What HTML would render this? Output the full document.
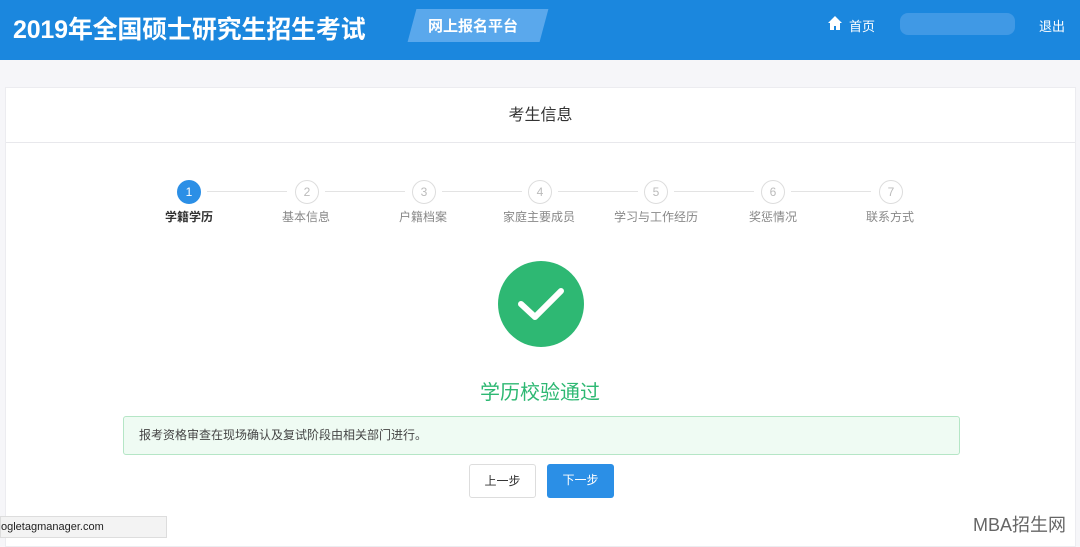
<!DOCTYPE html>
<html><head><meta charset="utf-8"><style>
*{margin:0;padding:0;box-sizing:border-box}
body{width:1080px;height:536px;background:#f6f6f9;font-family:"Liberation Sans","Noto Sans CJK SC",sans-serif;position:relative;overflow:hidden}
.hdr{position:absolute;left:0;top:0;width:1080px;height:60px;background:#1b87de}
.t{position:absolute;left:13px;top:10px;color:#fff;font-size:25px;font-weight:bold;letter-spacing:-0.2px}
.tag{position:absolute;left:412px;top:9px;width:132px;height:33px;background:#5aa8ec;transform:skewX(-15deg)}
.tagt{position:absolute;left:428px;top:15px;color:#fff;font-size:15px;font-weight:bold}
.nav{position:absolute;color:#fff;font-size:13px;top:16px}
.card{position:absolute;left:5px;top:87px;width:1071px;height:460px;background:#fff;border:1px solid #ececf0}
.ch{height:55px;border-bottom:1px solid #e8e8ec;text-align:center;line-height:55px;font-size:16px;color:#333}
.c{position:absolute;top:180px;width:24px;height:24px;border-radius:50%;border:1px solid #ddd;color:#bbb;font-size:12px;text-align:center;line-height:22px}
.c.a{background:#2b8fe6;border-color:#2b8fe6;color:#fff}
.ln{position:absolute;top:191px;height:1px;background:#e3e3e3}
.lb{position:absolute;top:208px;font-size:12px;color:#888;width:120px;text-align:center}
.ok{position:absolute;left:498px;top:261px;width:86px;height:86px;border-radius:50%;background:#2eb873}
.alert{position:absolute;left:123px;top:416px;width:837px;height:39px;background:#effbf3;border:1px solid #b5e6c6;border-radius:3px;font-size:12px;color:#444;padding-left:15px;line-height:37px}
.b{position:absolute;top:464px;width:67px;height:34px;border-radius:3px;font-size:12px;text-align:center;line-height:32px}
</style></head><body>
<div class="hdr">
<div class="t">2019年全国硕士研究生招生考试</div>
<div class="tag"></div><div class="tagt">网上报名平台</div>
<svg style="position:absolute;left:827px;top:15px" width="16" height="16" viewBox="0 0 16 16"><path d="M8 1L1 8h2v7h4v-4h2v4h4V8h2z" fill="#fff"/></svg>
<div class="nav" style="left:849px">首页</div>
<div style="position:absolute;left:900px;top:13px;width:115px;height:22px;background:#4a9de6;border-radius:8px;opacity:.8"></div>
<div class="nav" style="left:1039px">退出</div>
</div>
<div class="card"><div class="ch">考生信息</div></div>
<div class="ln" style="left:207px;width:80px"></div>
<div class="ln" style="left:325px;width:80px"></div>
<div class="ln" style="left:442px;width:80px"></div>
<div class="ln" style="left:558px;width:80px"></div>
<div class="ln" style="left:674px;width:80px"></div>
<div class="ln" style="left:791px;width:80px"></div>
<div class="c a" style="left:177px">1</div>
<div class="c" style="left:295px">2</div>
<div class="c" style="left:412px">3</div>
<div class="c" style="left:528px">4</div>
<div class="c" style="left:644px">5</div>
<div class="c" style="left:761px">6</div>
<div class="c" style="left:879px">7</div>
<div class="lb" style="left:129px;color:#333;font-weight:bold">学籍学历</div>
<div class="lb" style="left:246px">基本信息</div>
<div class="lb" style="left:363px">户籍档案</div>
<div class="lb" style="left:479px">家庭主要成员</div>
<div class="lb" style="left:596px">学习与工作经历</div>
<div class="lb" style="left:713px">奖惩情况</div>
<div class="lb" style="left:830px">联系方式</div>
<div class="ok"><svg width="86" height="86" viewBox="0 0 86 86"><path d="M23 43l14 13 26-26" fill="none" stroke="#fff" stroke-width="6" stroke-linecap="round" stroke-linejoin="round"/></svg></div>
<div style="position:absolute;left:0;width:1080px;top:376px;text-align:center;font-size:20px;color:#2eb873">学历校验通过</div>
<div class="alert">报考资格审查在现场确认及复试阶段由相关部门进行。</div>
<div class="b" style="left:469px;border:1px solid #ddd;background:#fff;color:#333">上一步</div>
<div class="b" style="left:547px;background:#2b8fe6;color:#fff">下一步</div>
<div style="position:absolute;left:0;top:516px;width:167px;height:22px;background:#f3f3f3;border:1px solid #ddd;font-size:11px;color:#222;line-height:20px">ogletagmanager.com</div>
<div style="position:absolute;left:973px;top:511px;font-size:18px;color:#666">MBA招生网</div>
</body></html>
